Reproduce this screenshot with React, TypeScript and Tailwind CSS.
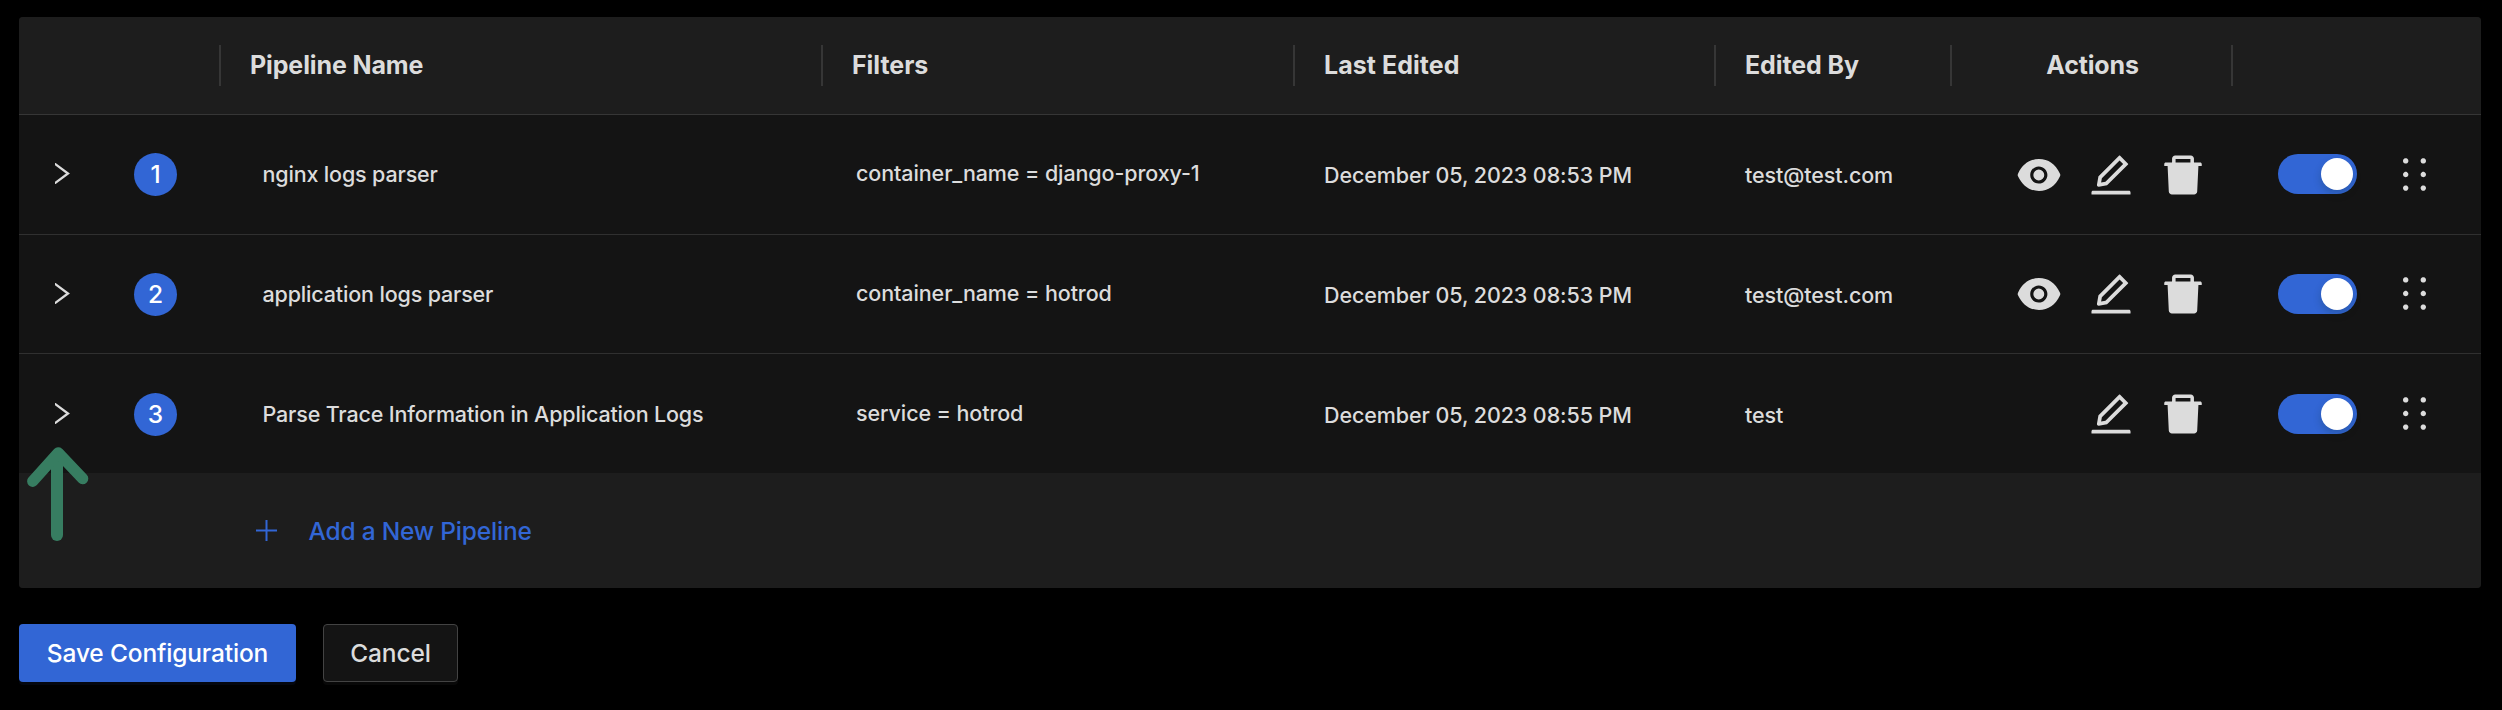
import { AiFillDelete, AiFillEye, AiOutlineEdit, AiOutlineHolder } from 'react-icons/ai';

type Pipeline = {
  id: number;
  name: string;
  filter: string;
  editedAt: string;
  editedBy: string;
  preview: boolean;
  row: string;
  icons: string;
};

const pipelines: Pipeline[] = [
  {
    id: 1,
    name: 'nginx logs parser',
    filter: 'container_name = django-proxy-1',
    editedAt: 'December 05, 2023 08:53 PM',
    editedBy: 'test@test.com',
    preview: true,
    row: 'h-[120px] border-b',
    icons: '',
  },
  {
    id: 2,
    name: 'application logs parser',
    filter: 'container_name = hotrod',
    editedAt: 'December 05, 2023 08:53 PM',
    editedBy: 'test@test.com',
    preview: true,
    row: 'h-[119px] border-b pt-px',
    icons: 'pb-0.5',
  },
  {
    id: 3,
    name: 'Parse Trace Information in Application Logs',
    filter: 'service = hotrod',
    editedAt: 'December 05, 2023 08:55 PM',
    editedBy: 'test',
    preview: false,
    row: 'h-[119px] pt-0.5',
    icons: 'pb-0.5',
  },
];

const columns = 'grid grid-cols-[202px_602px_472px_421px_236px_281px_248px]';

function HeaderCell({ label, className = '', last = false }: { label?: string; className?: string; last?: boolean }) {
  return (
    <div className={`flex items-center ${className}`}>
      <span className="flex-1 whitespace-nowrap">{label}</span>
      {!last && <span className="h-[41px] w-0.5 bg-[#363636]" />}
    </div>
  );
}

function Chevron() {
  return (
    <svg width="15" height="21" viewBox="0 0 15 21" fill="none" className="shrink-0">
      <path d="M-1 0.2L13 10.5L-1 20.8" stroke="#dcdcdc" strokeWidth="2.3" />
    </svg>
  );
}

function Toggle() {
  return (
    <button className="mb-px flex h-10 w-[79px] items-center justify-end rounded-full bg-[#3266d5] p-1">
      <span className="size-8 rounded-full bg-white shadow-[0_4px_8px_rgba(0,35,11,0.2)]" />
    </button>
  );
}

function PipelineRow({ p }: { p: Pipeline }) {
  return (
    <div className={`${columns} items-stretch border-[#303030] text-[21.5px] ${p.row}`}>
      <div className="flex items-center pl-9">
        <div className="mb-0.5 flex w-[79px]">
          <Chevron />
        </div>
        <span className="flex size-[43px] items-center justify-center rounded-full bg-[#3266d5] text-[24.5px] font-medium text-white">
          {p.id}
        </span>
      </div>
      <div className="flex items-center pl-[41.5px] tracking-[-0.16px]">{p.name}</div>
      <div className="flex items-center pb-0.5 pl-[33px] tracking-[-0.1px]">{p.filter}</div>
      <div className="flex items-center pt-0.5 pl-[29px] tracking-[-0.09px]">{p.editedAt}</div>
      <div className="flex items-center pt-0.5 pl-[29px] tracking-[-0.1px]">{p.editedBy}</div>
      <div className={`flex items-center justify-end gap-[22px] pr-[25.5px] ${p.icons}`}>
        {p.preview && <AiFillEye size={50} />}
        <AiOutlineEdit size={50} />
        <AiFillDelete size={50} />
      </div>
      <div className="flex items-center pl-[45px]">
        <Toggle />
        <div className={`ml-[33px] ${p.icons}`}>
          <AiOutlineHolder size={49} />
        </div>
      </div>
    </div>
  );
}

export default function App() {
  return (
    <div className="relative h-[710px] w-[2502px] overflow-hidden bg-black pt-[17px] pl-[19px] font-['Inter',sans-serif] font-[450] text-[#dcdcdc]">
      <div className="w-[2462px] overflow-hidden rounded bg-[#141414]">
        <div className={`${columns} h-[98px] border-b border-[#363636] bg-[#1d1d1d] text-[25px] font-[650]`}>
          <HeaderCell />
          <HeaderCell label="Pipeline Name" className="pl-[29px] tracking-[-0.12px]" />
          <HeaderCell label="Filters" className="pl-[29px] tracking-[-0.05px]" />
          <HeaderCell label="Last Edited" className="pl-[29px] tracking-[0.05px]" />
          <HeaderCell label="Edited By" className="pl-[29px] tracking-[-0.1px]" />
          <HeaderCell label="Actions" className="pl-0.5 text-center tracking-[-0.15px]" />
          <HeaderCell last />
        </div>
        {pipelines.map((p) => (
          <PipelineRow key={p.id} p={p} />
        ))}
        <div className="flex h-[115px] items-center bg-[#1d1d1d] pl-[237px] text-[24.5px] tracking-[-0.2px] text-[#3266d5]">
          <svg width="21" height="21" viewBox="0 0 21 21" fill="currentColor">
            <path d="M9.5 0h2v21h-2zM0 9.5h21v2H0z" />
          </svg>
          <span className="ml-[31.5px] pt-0.5">Add a New Pipeline</span>
        </div>
      </div>

      <div className="mt-9 flex gap-[27px] text-[24.5px] tracking-[-0.16px]">
        <button className="h-[58px] w-[277px] rounded bg-[#3266d5] text-white shadow-[0_3px_0_rgba(50,102,213,0.07)]">
          Save Configuration
        </button>
        <button className="h-[58px] w-[135px] rounded border border-[#434343] bg-[#141414] shadow-[0_3px_0_rgba(255,255,255,0.03)]">
          Cancel
        </button>
      </div>

      {/* Pointer annotation under the expand control of the last pipeline */}
      <svg
        width="70"
        height="100"
        viewBox="0 0 70 100"
        fill="none"
        stroke="#377d61"
        strokeLinecap="round"
        strokeLinejoin="round"
        className="absolute top-[444px] left-[23px]"
      >
        <path d="M34 12V91" strokeWidth="12" />
        <path d="M9.7 37.3L35.3 8.8L59.7 34.7" strokeWidth="11.2" />
      </svg>
    </div>
  );
}
